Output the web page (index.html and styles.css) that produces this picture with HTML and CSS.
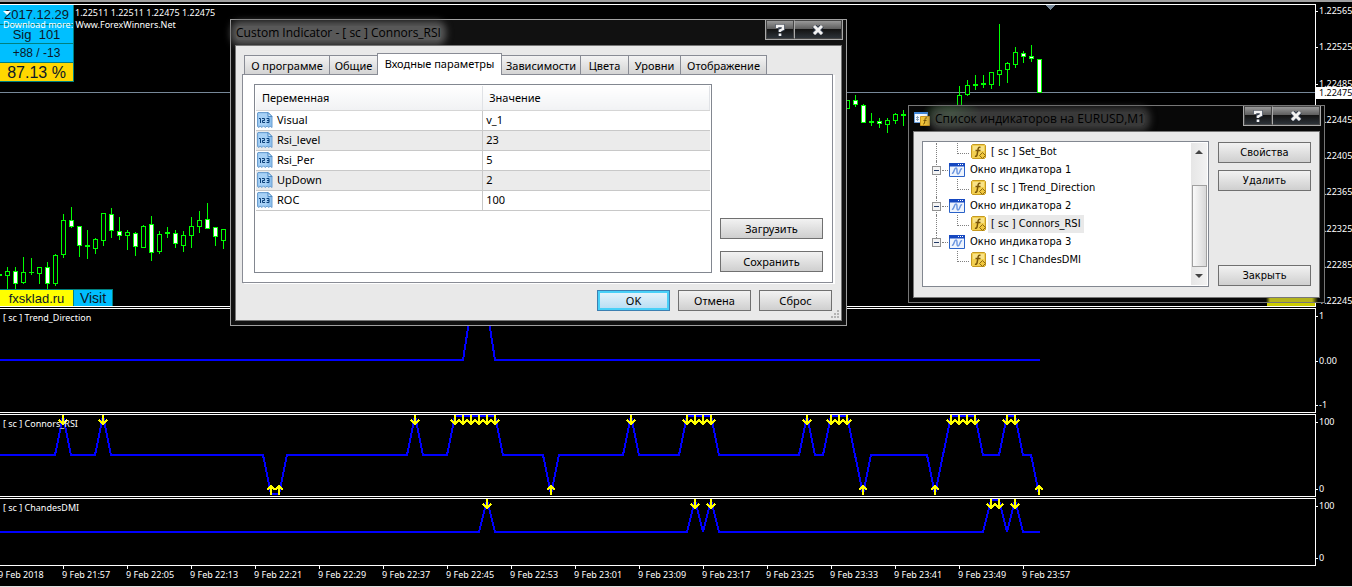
FILE: index.html
```html
<!DOCTYPE html>
<html lang="ru">
<head>
<meta charset="utf-8">
<title>EURUSD,M1</title>
<link rel="stylesheet" href="styles.css">
</head>
<body>
<svg class="defs" aria-hidden="true">
  <symbol id="i-var" viewBox="0 0 16 16">
    <path d="M1 .5h10l4 4v11l-2-1.500-1 1.500-2-1.500-1.500 1.500-2-1.500-1.500 1.500-2-1.500L2 15.500l-1.500-1V1z" fill="#8fc1ee" stroke="#6d9fd0"/>
    <path d="M1.500 1.500h9v12h-9z" fill="#b9dcfa" opacity=".6"/>
    <path d="M11 .5v4h4z" fill="#d9ecfc" stroke="#4f8ac4"/>
    <path d="M2 6.500h1.500V11M5 6.500h2.500v2H5.500v2H8M9.500 6.500H12v4H9.500M10 8.500h2" fill="none" stroke="#0b3f78"/>
  </symbol>
  <symbol id="i-win" viewBox="0 0 16 14">
    <path d="M.5.5h15v13H.5z" fill="#eef4fd" stroke="#2a62c8"/>
    <path d="M0 0h16v3.500H0z" fill="#1648c0"/>
    <path d="M9 1.500h1M11 1.500h1M13 1.500h1" stroke="#fff"/>
    <path d="M3 10c2 1 2-5 4-5s0 6 2 6 2-6 4-5" fill="none" stroke="#6d97e0" stroke-width="1.500"/>
  </symbol>
  <symbol id="i-fx" viewBox="0 0 16 16">
    <path d="M1.500.5h12l1 1v12l-1 1h-12l-1-1v-12z" fill="#f2cf50" stroke="#c69a20"/>
    <path d="M2 2h11v5H2z" fill="#fbe9a0" opacity=".7"/>
    <path d="M9.500 3.500c-2-1-2.500 1-2.500 2.500l-1 5c0 1-1 1.500-2 1M4.500 6.500h5" fill="none" stroke="#7a5608" stroke-width="1.500"/>
    <path d="M11.500 8.500l3 3-3 3-3-3z" fill="#f0c63c" stroke="#8f6a10"/>
  </symbol>
  <symbol id="i-list" viewBox="0 0 16 16">
    <path d="M.5 1.500h13v10H.5z" fill="#f4f9ff" stroke="#6aa0dc"/>
    <path d="M0 1h14v2H0z" fill="#3f86d8"/>
    <path d="M3.500 5v5M2 6.500h3M2 8.500h3" stroke="#8aa4c0"/>
    <path d="M6.500 5.500h9v9h-9z" fill="#f2c53a" stroke="#d09a20"/>
    <path d="M13 7c-2-1-2 1-2 2l-.5 3c0 1-1 1-1.500 1M9.500 9.500h3" fill="none" stroke="#7a5608"/>
  </symbol>
  <symbol id="i-help" viewBox="0 0 10 12">
    <path d="M2 4V2.500h6V5L5 6.500V8M5 9.500V12" fill="none" stroke="#333c4c" stroke-width="4"/>
    <path d="M2 4V2h6V5L5 6.500V8M5 9.500V12" fill="none" stroke="#f2f2f2" stroke-width="2.500"/>
  </symbol>
  <symbol id="i-close" viewBox="0 0 12 10">
    <path d="M2 1l8 8M10 1l-8 8" stroke="#333c4c" stroke-width="5"/>
    <path d="M2 1l8 8M10 1l-8 8" stroke="#f2f2f2" stroke-width="3"/>
  </symbol>
  <symbol id="a-down" viewBox="0 0 10 11" overflow="visible"><path d="M5 0v9M1 5l4 4 4-4" fill="none" stroke="#ff0" stroke-width="2"/></symbol>
  <symbol id="a-up" viewBox="0 0 10 11" overflow="visible"><path d="M5 10V1M1 5l4-4 4 4" fill="none" stroke="#ff0" stroke-width="2"/></symbol>
</svg>

<main class="terminal">
  <section class="pane price">
    <div class="plot">
      <svg class="chart" id="price" aria-hidden="true">
        <path d="M0 87.500h2000" stroke="#778899"/>
        <path d="M1045 0h11l-5.500 5z" fill="#778899"/>
      </svg>
      <div class="overlay">
        <div class="stats">
          <span class="stat first">2017.12.29</span>
          <span class="stat">Sig&nbsp; 101</span>
          <span class="stat small">+88 / -13</span>
          <span class="stat gold">87.13 %</span>
        </div>
        <div class="bottom">
          <div class="links"><a class="site" href="#">fxsklad.ru</a><a class="visit" href="#">Visit</a></div>
          <span class="strip"></span>
        </div>
      </div>
      <div class="quote">
        <div class="ohlc"><svg width="8" height="4" aria-hidden="true"><path d="M0 0h8L4 4z" fill="#fff"/></svg><span>1.22511 1.22511 1.22475 1.22475</span></div>
        <div>Download more: Www.ForexWinners.Net</div>
      </div>
    </div>
    <div class="scale">
      <span>1.22565</span><span>1.22525</span><span>1.22485</span><span>1.22445</span><span>1.22405</span><span>1.22365</span><span>1.22325</span><span>1.22285</span><span>1.22245</span>
      <b class="current">1.22475</b>
    </div>
  </section>
  <section class="pane trend">
    <div class="plot">
      <svg class="chart" aria-hidden="true"><polyline class="line" points="0,51 463,51 471,0 487,0 495,51 1040,51"/></svg>
      <h2 class="name">[ sc ] Trend_Direction</h2>
    </div>
    <div class="scale"><span>1</span><span>0.00</span><span>-1</span></div>
  </section>
  <section class="pane rsi">
    <div class="plot">
      <svg class="chart" id="rsi" aria-hidden="true"><polyline class="line" points="0,40 55,40 63,1 71,40 95,40 103,1 111,40 263,40 271,79 279,79 287,40 407,40 415,1 423,40 447,40 455,1 495,1 503,40 543,40 551,79 559,40 623,40 631,1 639,40 679,40 687,1 711,1 719,40 799,40 807,1 815,40 823,40 831,1 847,1 863,79 871,40 927,40 935,79 951,1 975,1 983,40 999,40 1007,1 1015,1 1023,40 1031,40 1039,79"/></svg>
      <h2 class="name">[ sc ] Connors_RSI</h2>
    </div>
    <div class="scale"><span>100</span><span>0</span></div>
  </section>
  <section class="pane dmi">
    <div class="plot">
      <svg class="chart" id="dmi" aria-hidden="true"><polyline class="line" points="0,33 479,33 487,1 495,33 687,33 695,1 703,33 711,1 719,33 983,33 991,1 999,1 1007,33 1015,1 1023,33 1040,33"/></svg>
      <h2 class="name">[ sc ] ChandesDMI</h2>
    </div>
    <div class="scale"><span>100</span><span>0</span></div>
  </section>
  <ol class="times">
    <li>9 Feb 2018</li><li>9 Feb 21:57</li><li>9 Feb 22:05</li><li>9 Feb 22:13</li><li>9 Feb 22:21</li><li>9 Feb 22:29</li><li>9 Feb 22:37</li><li>9 Feb 22:45</li><li>9 Feb 22:53</li><li>9 Feb 23:01</li><li>9 Feb 23:09</li><li>9 Feb 23:17</li><li>9 Feb 23:25</li><li>9 Feb 23:33</li><li>9 Feb 23:41</li><li>9 Feb 23:49</li><li>9 Feb 23:57</li>
  </ol>
</main>

<section class="window params" role="dialog" aria-labelledby="t1">
  <header class="titlebar">
    <h1 class="title" id="t1">Custom Indicator - [ sc ] Connors_RSI</h1>
    <div class="caption"><button class="help" aria-label="Справка"><svg width="10" height="12"><use href="#i-help"/></svg></button><button class="close" aria-label="Закрыть окно"><svg width="12" height="10"><use href="#i-close"/></svg></button></div>
  </header>
  <div class="client">
    <div class="tabs" role="tablist">
      <button class="tab t-about" role="tab">О программе</button><button class="tab t-common" role="tab">Общие</button><button class="tab t-inputs active" role="tab" aria-selected="true">Входные параметры</button><button class="tab t-deps" role="tab">Зависимости</button><button class="tab t-colors" role="tab">Цвета</button><button class="tab t-levels" role="tab">Уровни</button><button class="tab t-view" role="tab">Отображение</button>
    </div>
    <div class="sheet">
      <div class="grid">
        <table class="vars">
          <thead><tr><th>Переменная</th><th>Значение</th></tr></thead>
          <tbody>
            <tr><td><span class="var"><svg width="16" height="16"><use href="#i-var"/></svg>Visual</span></td><td>v_1</td></tr>
            <tr><td><span class="var"><svg width="16" height="16"><use href="#i-var"/></svg>Rsi_level</span></td><td>23</td></tr>
            <tr><td><span class="var"><svg width="16" height="16"><use href="#i-var"/></svg>Rsi_Per</span></td><td>5</td></tr>
            <tr><td><span class="var"><svg width="16" height="16"><use href="#i-var"/></svg>UpDown</span></td><td>2</td></tr>
            <tr><td><span class="var"><svg width="16" height="16"><use href="#i-var"/></svg>ROC</span></td><td>100</td></tr>
          </tbody>
        </table>
      </div>
      <div class="side"><button class="btn">Загрузить</button><button class="btn">Сохранить</button></div>
    </div>
    <footer class="actions">
      <button class="btn primary">OK</button><button class="btn">Отмена</button><button class="btn">Сброс</button>
    </footer>
    <svg class="grip" width="8" height="8" aria-hidden="true"><path d="M6 1h2M3 4h2M6 4h2M0 7h2M3 7h2M6 7h2" stroke="#b4b4b4" stroke-width="2"/></svg>
  </div>
</section>

<section class="window indicators" role="dialog" aria-labelledby="t2">
  <header class="titlebar">
    <svg width="16" height="16" aria-hidden="true"><use href="#i-list"/></svg>
    <h1 class="title" id="t2">Список индикаторов на EURUSD,M1</h1>
    <div class="caption"><button class="help" aria-label="Справка"><svg width="10" height="12"><use href="#i-help"/></svg></button><button class="close" aria-label="Закрыть окно"><svg width="12" height="10"><use href="#i-close"/></svg></button></div>
  </header>
  <div class="client">
    <div class="treebox">
      <ul class="tree">
        <li class="leaf"><svg width="16" height="16"><use href="#i-fx"/></svg><span>[ sc ] Set_Bot</span></li>
        <li class="node"><button class="fold" aria-label="Свернуть"></button><svg width="16" height="14"><use href="#i-win"/></svg><span>Окно индикатора 1</span></li>
        <li class="leaf"><svg width="16" height="16"><use href="#i-fx"/></svg><span>[ sc ] Trend_Direction</span></li>
        <li class="node"><button class="fold" aria-label="Свернуть"></button><svg width="16" height="14"><use href="#i-win"/></svg><span>Окно индикатора 2</span></li>
        <li class="leaf"><svg width="16" height="16"><use href="#i-fx"/></svg><span class="selected">[ sc ] Connors_RSI</span></li>
        <li class="node last"><button class="fold" aria-label="Свернуть"></button><svg width="16" height="14"><use href="#i-win"/></svg><span>Окно индикатора 3</span></li>
        <li class="leaf last"><svg width="16" height="16"><use href="#i-fx"/></svg><span>[ sc ] ChandesDMI</span></li>
      </ul>
      <div class="scrollbar" aria-hidden="true">
        <svg width="8" height="4"><path d="M0 4l4-4 4 4z" fill="#444"/></svg>
        <span class="thumb"></span>
        <svg width="8" height="4"><path d="M0 0l4 4 4-4z" fill="#444"/></svg>
      </div>
    </div>
    <div class="commands"><button class="btn">Свойства</button><button class="btn">Удалить</button><button class="btn dismiss">Закрыть</button></div>
  </div>
</section>
<script src="chart.js"></script>
</body>
</html>
```
FILE: styles.css
```css
* { box-sizing: border-box; }
html, body { margin: 0; height: 100%; }
body {
  background: #000;
  color: #000;
  font: 11px/16px "Noto Sans", sans-serif;
  overflow: hidden;
}
h1, h2 { margin: 0; font-weight: normal; }
ul, ol { margin: 0; padding: 0; list-style: none; }
button { font: inherit; color: inherit; padding: 0; margin: 0; }
svg { display: block; flex: none; }
.defs { position: absolute; width: 0; height: 0; }

/* Terminal */
.terminal {
  display: flex;
  flex-direction: column;
  gap: 1px;
  min-height: 100vh;
  padding-top: 2px;
  border-top: 2px solid #a0a0a0;
  border-bottom: 1px solid #e0e0e0;
  color: #fff;
  font: 9px/12px "Noto Sans", sans-serif;
}
.pane { display: flex; }
.price { flex: 1; }
.trend { height: 105px; }
.rsi { height: 83px; }
.dmi { height: 68px; }
.plot {
  position: relative;
  flex: 1;
  display: grid;
  min-width: 0;
  border: solid #fff;
  border-width: 1px 1px 1px 0;
}
.plot > * { grid-area: 1 / 1; }
.chart { width: 100%; height: 100%; overflow: hidden; shape-rendering: crispEdges; }
.line { fill: none; stroke: #00f; stroke-width: 2; }
.name { font-size: 9px; line-height: 12px; padding: 3px; align-self: start; }

.overlay { display: flex; flex-direction: column; justify-content: space-between; }
.stats { width: 74px; border-right: 1px solid #008080; }
.stat {
  display: block;
  height: 19px;
  border-bottom: 1px solid #008080;
  background: #00bfff;
  color: #0c1828;
  font: 13px/19px "Liberation Sans", sans-serif;
  text-align: center;
}
.stat.first { height: 20px; }
.stat.small { font-size: 12px; }
.stat.gold { background: #ffd700; font-size: 16px; }
.quote { position: absolute; top: 2px; left: 3px; }
.ohlc { display: flex; align-items: center; gap: 64px; }
.bottom { display: flex; justify-content: space-between; align-items: flex-end; }
.links { display: flex; font: 13px/17px "Liberation Sans", sans-serif; }
.links a {
  height: 17px;
  border: solid #008080;
  border-width: 1px 1px 0 0;
  color: #0c1828;
  text-align: center;
  text-decoration: none;
}
.site { width: 74px; background: #ff0; }
.visit { width: 39px; background: #00bfff; font-size: 14px; }
.strip { width: 48px; height: 10px; background: #cc0; }

.scale {
  position: relative;
  width: 36px;
  display: flex;
  flex-direction: column;
  justify-content: space-between;
  padding: 2px 0;
}
.price .scale { padding: 1px 0 0; }
.scale span { padding-left: 3px; background: linear-gradient(#fff, #fff) 0 6px / 2px 1px no-repeat; white-space: nowrap; }
.current {
  position: absolute;
  top: 83px;
  left: 0;
  width: 100%;
  padding-left: 3px;
  background: #fff;
  color: #000;
  font-weight: normal;
  overflow: hidden;
}
.times { display: flex; height: 20px; margin: -1px 0 0 -2px; overflow: hidden; }
.times li {
  flex: none;
  width: 64px;
  padding-top: 3px;
  background: linear-gradient(#fff, #fff) 1px 0 / 1px 3px no-repeat;
  white-space: nowrap;
}

/* Windows */
.window {
  position: absolute;
  padding: 0 5px 5px;
  border: 1px solid #a0a0a0;
  background: #111;
}
.params { left: 230px; top: 19px; width: 617px; }
.indicators {
  left: 908px;
  top: 105px;
  width: 417px;
  border-color: #777;
  font-family: "DejaVu Sans Condensed", "Noto Sans", sans-serif;
  background:
    radial-gradient(ellipse 30px 16px at 42px 8px, #2d5a2d, transparent),
    linear-gradient(90deg, transparent, #b4b41c 4px, #b4b41c 46px, transparent) right 6px bottom 0 / 52px 6px no-repeat,
    #080808;
}
.titlebar { display: flex; align-items: center; height: 25px; }
.title {
  font: 12px/14px "Open Sans", "Noto Sans", sans-serif;
  background: #585858;
  box-shadow: 0 0 7px 5px #585858;
  border-radius: 4px;
  white-space: nowrap;
}
.indicators .title { margin-left: 5px; background: #505050b0; box-shadow: 0 0 7px 5px #505050b0; }
.caption {
  display: flex;
  align-self: flex-start;
  margin-left: auto;
  margin-right: -2px;
  height: 20px;
  border: 1px solid #aaa;
  border-top: 0;
}
.caption button {
  display: flex;
  align-items: center;
  justify-content: center;
  border: 1px solid #444;
  background: linear-gradient(#999, #5c5c5c 48%, #141414 50%, #2c3238);
}
.help { width: 28px; }
.caption .close { width: 48px; border-left-color: #aaa; }
.client { position: relative; border: 1px solid #777; background: #e9e9e9; margin: 0 -1px -1px; }

.tabs { display: flex; align-items: flex-end; padding: 7px 0 0 8px; }
.tab {
  height: 19px;
  border: 1px solid #898c95;
  border-bottom: 0;
  background: linear-gradient(#f3f3f3, #d4d4d4);
  line-height: 17px;
  white-space: nowrap;
}
.tab + .tab { margin-left: -1px; }
.tab.active { position: relative; height: 22px; margin-bottom: -1px; padding-bottom: 2px; background: #fff; }
.t-about { width: 86px; }
.t-common { width: 49px; }
.t-inputs { width: 125px; }
.t-deps { width: 80px; }
.t-colors { width: 49px; }
.t-levels { width: 53px; }
.t-view { width: 87px; }
.sheet {
  display: flex;
  gap: 8px;
  margin: 0 8px 0 6px;
  padding: 9px 9px 9px 11px;
  border: 1px solid #898c95;
  box-shadow: 2px 1px #fff;
  background: #fff;
}
.grid { flex: 1; min-height: 189px; padding: 1px; border: 1px solid #828790; }
.vars { width: 100%; border-collapse: collapse; table-layout: fixed; }
.vars th {
  height: 24px;
  padding: 0 6px;
  border-bottom: 1px solid #d5d5d5;
  border-right: 1px solid #e0e2e6;
  background: linear-gradient(#fff, #f1f2f4);
  font-weight: normal;
  text-align: left;
}
.vars td { height: 20px; padding: 0 3px; border-bottom: 1px solid #c8c8c8; line-height: 16px; }
.vars td:first-child { padding: 0 1px; border-right: 1px solid #c8c8c8; }
.vars tr:nth-child(even) td { background: #ebebeb; }
.var { display: flex; align-items: center; gap: 4px; }
.side { display: flex; flex-direction: column; justify-content: flex-end; gap: 12px; width: 103px; padding-bottom: 1px; }
.btn {
  height: 21px;
  border: 1px solid #707070;
  background: linear-gradient(#f2f2f2, #cfcfcf);
  line-height: 19px;
  text-align: center;
}
.primary {
  border-color: #3c7fb1;
  box-shadow: inset 0 0 0 2px #48d0f8;
  background: linear-gradient(#e8f5fc, #b5dcf3);
}
.actions { display: flex; justify-content: flex-end; gap: 8px; padding: 7px 9px 9px; }
.actions .btn { width: 73px; }
.grip { position: absolute; right: 2px; bottom: 2px; }

.indicators .client { display: flex; gap: 9px; padding: 9px 8px 10px 8px; }
.treebox { flex: 1; display: flex; justify-content: space-between; height: 146px; padding: 1px; border: 1px solid #828790; background: #fff; }
.tree { padding-left: 8px; font-size: 11px; }
.tree li { position: relative; display: flex; align-items: center; height: 18px; white-space: nowrap; }
.tree span { padding: 0 3px; line-height: 18px; }
.selected { background: #e9e9e9; }
.node { padding-left: 17px; gap: 2px; }
.leaf { padding-left: 39px; gap: 1px; }
.tree li::before { content: ""; position: absolute; left: 4px; top: 0; height: 18px; border-left: 1px dotted #808080; }
.tree .leaf.last::before { display: none; }
.tree .node.last::before { height: 9px; }
.leaf::after { content: ""; position: absolute; left: 25px; top: 0; width: 11px; height: 10px; border: dotted #808080; border-width: 0 0 1px 1px; }
.node::after { content: ""; position: absolute; left: 10px; top: 9px; width: 6px; border-top: 1px dotted #808080; }
.fold {
  position: absolute;
  left: 0;
  top: 5px;
  width: 9px;
  height: 9px;
  border: 1px solid #919191;
  background: linear-gradient(#223a66, #223a66) center / 5px 1px no-repeat, #f4f4f4;
}
.scrollbar {
  display: flex;
  flex-direction: column;
  align-items: center;
  justify-content: space-between;
  width: 16px;
  padding: 7px 0;
  background: linear-gradient(90deg, #e6e6e6, #f2f2f2);
}
.thumb { width: 15px; height: 82px; margin-top: 24px; border: 1px solid #a0a0a0; background: linear-gradient(90deg, #fafafa, #d8d8d8); }
.commands { display: flex; flex-direction: column; gap: 7px; width: 93px; padding: 1px 0; }
.dismiss { margin-top: auto; }
```
FILE: chart.js
```js
// Candles: centre x, high, low, body top, body bottom, filled
const candles = [
  [-1,270,280,274,276,0],[7,267,289,271,276,0],[15,267,289,271,284,1],[23,257,284,272,283,0],[31,258,275,272,273,0],[39,267,284,267,274,0],
  [47,262,289,267,284,1],[55,254,286,255,284,0],[63,214,258,220,255,0],[71,207,228,220,227,1],[79,226,257,226,246,1],[87,230,259,245,247,0],
  [95,238,254,239,249,0],[103,213,246,213,241,0],[111,208,238,214,231,1],[119,217,240,231,236,1],[127,230,250,232,236,0],[135,232,256,233,247,1],
  [143,225,248,226,248,0],[151,216,261,224,253,1],[159,231,254,234,252,0],[167,227,238,232,234,0],[175,230,248,233,244,1],[183,231,252,235,246,0],
  [191,217,248,226,236,0],[199,211,233,220,227,0],[207,203,229,219,229,1],[215,227,246,227,237,1],[223,229,249,229,241,0],
  [847,100,109,100,109,0],[855,95,107,100,105,1],[863,104,123,105,123,1],[871,113,126,121,123,0],[879,118,128,121,124,1],[887,118,133,120,125,0],
  [895,113,124,114,121,0],[903,110,126,114,116,0],[959,86,120,95,115,0],[967,80,96,85,95,0],[975,75,90,84,86,0],[983,75,88,83,85,0],
  [991,72,89,72,85,0],[999,24,86,70,75,0],[1007,62,83,63,70,0],[1015,47,68,52,65,0],[1023,51,63,53,57,1],[1031,45,62,56,59,1],[1039,59,93,59,93,1]
];
const NS = "http://www.w3.org/2000/svg";
const add = (parent, tag, attrs) => {
  const el = document.createElementNS(NS, tag);
  for (const key in attrs) el.setAttribute(key, attrs[key]);
  parent.appendChild(el);
};
const top0 = 5;
const price = document.getElementById("price");
for (const [x, high, low, top, bottom, filled] of candles) {
  add(price, "rect", { x: x, y: high - top0, width: 1, height: low - high, fill: "#0f0" });
  add(price, "rect", { x: x - 2, y: top - top0, width: 5, height: bottom - top, fill: "#0f0" });
  if (bottom - top > 2) {
    add(price, "rect", { x: x - 1, y: top + 1 - top0, width: 3, height: bottom - top - 2, fill: filled ? "#fff" : "#000" });
  }
}
const arrows = (id, symbol, y, xs) => {
  const svg = document.getElementById(id);
  for (const x of xs) add(svg, "use", { href: "#" + symbol, x: x - 5, y: y, width: 10, height: 11 });
};
arrows("rsi", "a-down", 0, [63,103,415,455,463,471,479,487,495,631,687,695,703,711,807,831,839,847,951,959,967,975,1007,1015]);
arrows("rsi", "a-up", 70, [271,279,551,863,935,1039]);
arrows("dmi", "a-down", 0, [487,695,711,991,999,1015]);
```
